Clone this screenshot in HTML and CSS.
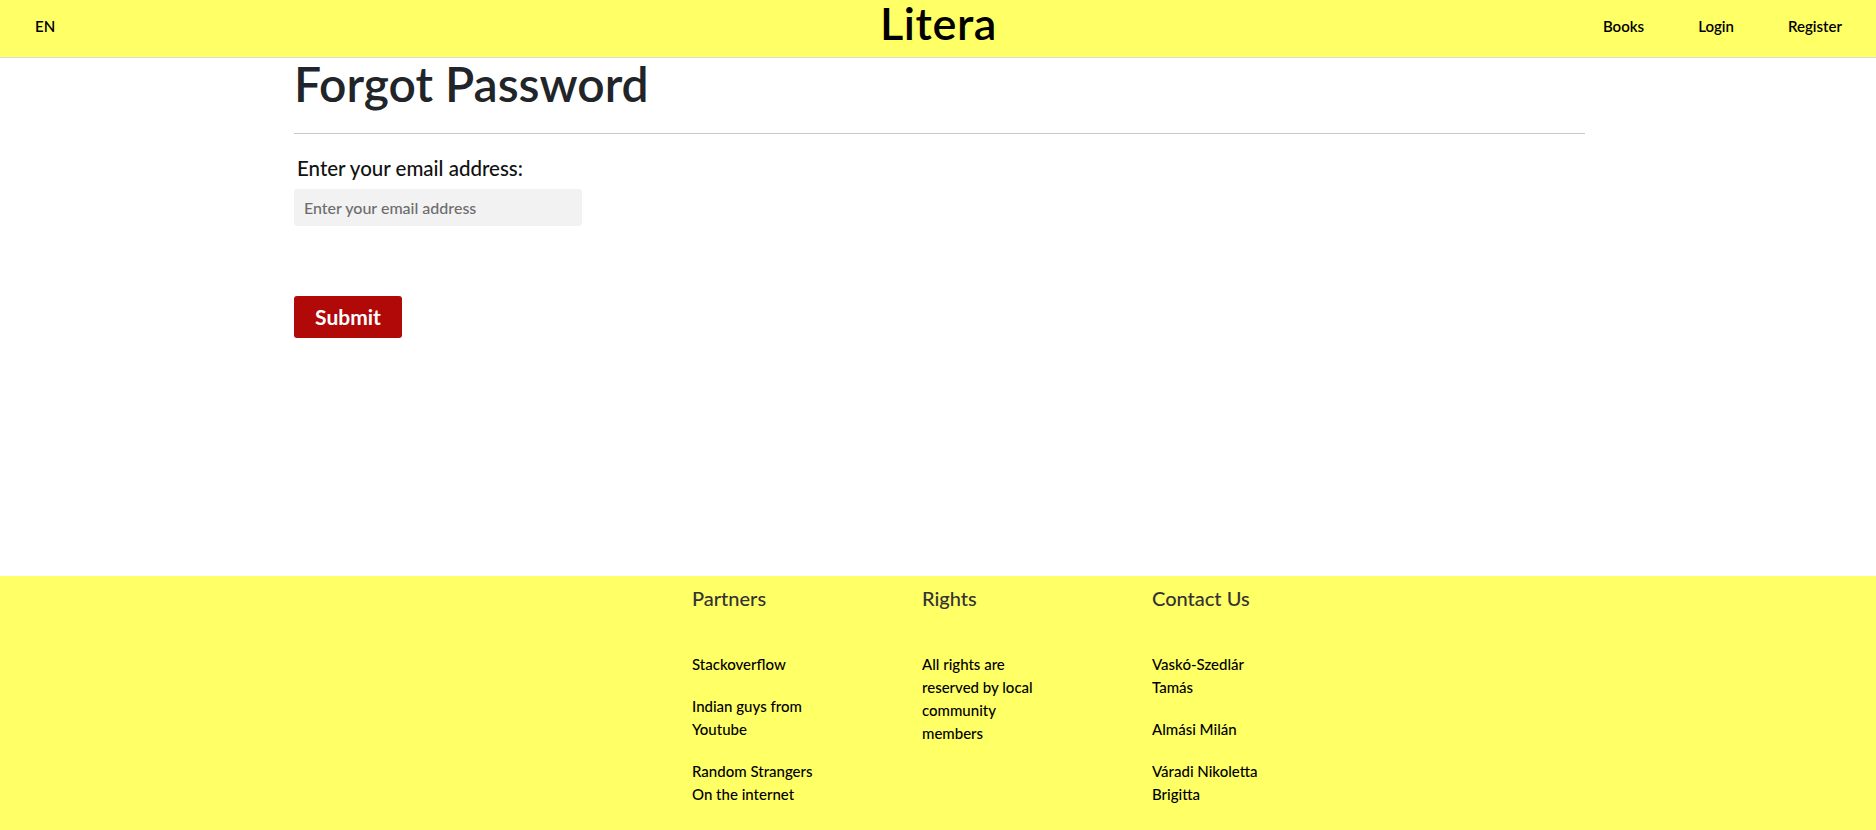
FILE: index.html
```html
<!DOCTYPE html>
<html lang="en">
<head>
<meta charset="utf-8">
<title>Litera - Forgot Password</title>
<link rel="stylesheet" href="styles.css">
</head>
<body>
<header class="topbar">
  <div class="lang">EN</div>
  <div class="brand">Litera</div>
  <nav class="nav">
    <a href="#">Books</a>
    <a href="#">Login</a>
    <a href="#">Register</a>
  </nav>
</header>
<main class="main">
  <div class="container">
    <h1 class="title">Forgot Password</h1>
    <hr class="divider">
    <form class="form">
      <label class="label" for="email">Enter your email address:</label>
      <input class="input" id="email" type="email" placeholder="Enter your email address">
      <button class="submit" type="button">Submit</button>
    </form>
  </div>
</main>
<footer class="footer">
  <div class="footer-cols">
    <div class="col">
      <h3 class="col-title">Partners</h3>
      <p class="item">Stackoverflow</p>
      <p class="item">Indian guys from Youtube</p>
      <p class="item">Random Strangers On the internet</p>
    </div>
    <div class="col">
      <h3 class="col-title">Rights</h3>
      <p class="item">All rights are reserved by local community members</p>
    </div>
    <div class="col">
      <h3 class="col-title">Contact Us</h3>
      <p class="item">Vaskó-Szedlár Tamás</p>
      <p class="item">Almási Milán</p>
      <p class="item">Váradi Nikoletta Brigitta</p>
    </div>
  </div>
</footer>
</body>
</html>
```
FILE: styles.css
```css
* { box-sizing: border-box; }
html, body { margin: 0; padding: 0; }
body {
  font-family: Lato, "Noto Sans", sans-serif;
  color: #212529;
  background: #fff;
}
.topbar {
  height: 58px;
  background: #ffff66;
  border-bottom: 1px solid #dcdcdc;
  display: flex;
  align-items: center;
  justify-content: space-between;
  padding: 0 34px 5px 35px;
}
.lang {
  font-size: 15px;
  font-weight: 600;
  color: #000;
  width: 300px;
}
.brand {
  align-self: flex-start;
  padding-top: 5px;
  font-size: 45px;
  letter-spacing: 0.6px;
  font-weight: 600;
  color: #000;
  line-height: 36px;
}
.nav {
  width: 300px;
  display: flex;
  justify-content: flex-end;
  gap: 54px;
}
.nav a {
  color: #000;
  text-decoration: none;
  font-size: 15px;
  font-weight: 600;
}
.main {
  min-height: 518px;
}
.container {
  width: 1291px;
  margin-left: 294px;
}
.title {
  margin: 0;
  font-size: 48px;
  font-weight: 600;
  line-height: 1.1;
  color: #212529;
}
.divider {
  margin: 22px 0 0;
  border: 0;
  border-top: 1px solid #c8c8c8;
}
.form {
  display: flex;
  flex-direction: column;
  align-items: flex-start;
}
.label {
  margin: 22px 0 0 3px;
  font-size: 20.5px;
  line-height: 24px;
  font-weight: 500;
  color: #111;
}
.input {
  margin-top: 9px;
  width: 288px;
  height: 37px;
  border: 0;
  border-radius: 3px;
  background: #f2f2f2;
  padding: 0 10px;
  font-family: inherit;
  font-size: 16px;
  font-weight: 500;
}
.input::placeholder { color: #6d6d6d; }
.submit {
  margin-top: 70px;
  width: 108px;
  height: 42px;
  border: 0;
  border-radius: 3px;
  background: #b10808;
  color: #fff;
  font-family: inherit;
  font-size: 21px;
  font-weight: 700;
}
.footer {
  background: #ffff66;
  padding: 10px 0 7px 692px;
}
.footer-cols {
  display: flex;
}
.col {
  width: 230px;
}
.col-title {
  margin: 0 0 43px;
  font-size: 20px;
  line-height: 24px;
  font-weight: 500;
  color: #333;
}
.item {
  margin: 0 0 19px;
  width: 135px;
  font-size: 15px;
  line-height: 23px;
  font-weight: 500;
  color: #000;
}
```
